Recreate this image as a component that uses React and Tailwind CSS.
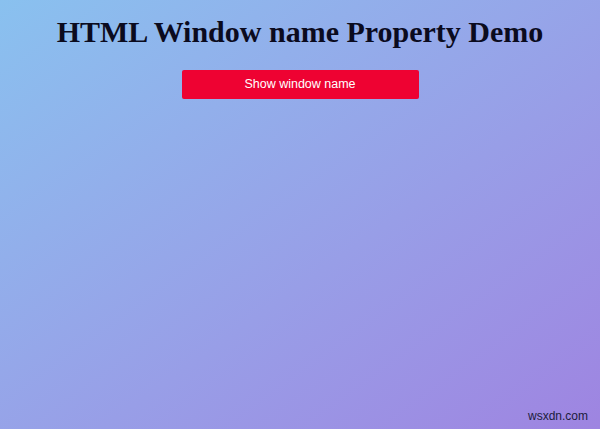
import React from "react";

export default function App() {
  const showName = () => {
    alert(window.name);
  };

  return (
    <div className="relative min-h-[429px] w-full bg-linear-to-br from-[#89c1ef] to-[#9e84e1] flex flex-col items-center pt-[14px]">
      <h1 className="font-['Liberation_Serif',serif] font-bold text-[30px] leading-[36px] text-[#0b0b1e]">
        HTML Window name Property Demo
      </h1>
      <button
        onClick={showName}
        className="mt-[20px] w-[237px] h-[29px] rounded-[2px] bg-[#ee0232] text-white text-[12.5px] font-['Liberation_Sans',Arial,sans-serif]"
      >
        Show window name
      </button>
      <span className="absolute right-[12px] bottom-[4px] text-[12px] text-[#1c1c3c] font-['Liberation_Sans',Arial,sans-serif]">
        wsxdn.com
      </span>
    </div>
  );
}
